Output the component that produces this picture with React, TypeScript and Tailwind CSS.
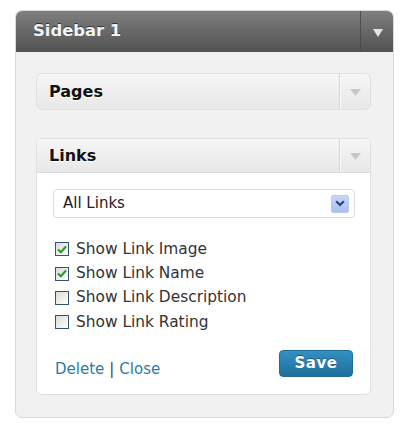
import { useState } from 'react';

const font = { fontFamily: '"DejaVu Sans", Verdana, sans-serif' };

function DownArrow({ color, w = 10, h = 8 }: { color: string; w?: number; h?: number }) {
  return (
    <svg width={w} height={h} viewBox={`0 0 ${w} ${h}`}>
      <polygon points={`0,0 ${w},0 ${w / 2},${h}`} fill={color} />
    </svg>
  );
}

function Checkbox({ checked }: { checked: boolean }) {
  return (
    <div className="w-[14px] h-[14px] border border-[#2f5478] bg-gradient-to-br from-[#dcdad3] to-white flex items-center justify-center">
      {checked && (
        <svg width="10" height="9" viewBox="0 0 10 9">
          <path d="M1 4.5 L3.8 7.2 L9 1.5" stroke="#21a121" strokeWidth="2.2" fill="none" />
        </svg>
      )}
    </div>
  );
}

export default function App() {
  const [options, setOptions] = useState([
    { label: 'Show Link Image', checked: true },
    { label: 'Show Link Name', checked: true },
    { label: 'Show Link Description', checked: false },
    { label: 'Show Link Rating', checked: false },
  ]);

  const toggle = (i: number) =>
    setOptions(options.map((o, j) => (j === i ? { ...o, checked: !o.checked } : o)));

  return (
    <div className="w-[405px] h-[431px] bg-white pt-[10px] pl-[15px]" style={font}>
      <div className="w-[379px] h-[408px] rounded-[7px] border border-[#d9d9d9] bg-[#f1f1f1] flex flex-col overflow-hidden">
        {/* Sidebar header */}
        <div className="h-[41px] flex bg-gradient-to-b from-[#7f7f7f] to-[#525252] shrink-0">
          <div className="flex-1 flex items-center pl-[17px] text-[16.4px] font-bold text-[#f4f4f4] [text-shadow:0_-1px_0_#333]">
            Sidebar 1
          </div>
          <div className="w-[33px] border-l border-[#4c4c4c] flex items-center justify-center pl-[1px] pt-[2px]">
            <DownArrow color="#e4e4e4" w={10} h={8} />
          </div>
        </div>

        <div className="pl-[20px] pr-[22px] pt-[21px]">
          {/* Pages widget */}
          <div className="h-[37px] rounded-[6px] border border-[#e0e0e0] bg-gradient-to-b from-[#f6f6f6] to-[#e8e8e8] flex">
            <div className="flex-1 flex items-center pl-[12px] text-[16px] font-bold text-[#111] [text-shadow:0_1px_0_#fff]">
              Pages
            </div>
            <div className="w-[31px] border-l border-[#d6d6d6] shadow-[inset_1px_0_0_#fafafa] flex items-center justify-center pt-[2px]">
              <DownArrow color="#c9c9c9" w={11} h={7} />
            </div>
          </div>

          {/* Links widget */}
          <div className="mt-[28px] rounded-[6px] border border-[#e0e0e0] overflow-hidden bg-white">
            <div className="h-[34px] border-b border-[#dedede] bg-gradient-to-b from-[#f6f6f6] to-[#e8e8e8] flex">
              <div className="flex-1 flex items-center pl-[12px] text-[16px] font-bold text-[#111] [text-shadow:0_1px_0_#fff]">
                Links
              </div>
              <div className="w-[31px] border-l border-[#d6d6d6] shadow-[inset_1px_0_0_#fafafa] flex items-center justify-center pt-[2px]">
                <DownArrow color="#c9c9c9" w={11} h={7} />
              </div>
            </div>

            <div className="pl-[16px] pr-[15px] pt-[16px] pb-[15px]">
              <div className="h-[29px] rounded-[4px] border border-[#dcdcdc] flex items-center justify-between pl-[9px] pr-[5px]">
                <span className="text-[15px] text-[#222]">All Links</span>
                <div className="w-[18px] h-[18px] rounded-[2px] bg-gradient-to-b from-[#c6d6f8] to-[#a9c0ef] border border-[#b9cbef] flex items-center justify-center">
                  <svg width="10" height="7" viewBox="0 0 10 7">
                    <path d="M1.2 1.2 L5 5 L8.8 1.2" stroke="#27457e" strokeWidth="2.2" fill="none" />
                  </svg>
                </div>
              </div>

              <div className="mt-[19px] flex flex-col">
                {options.map((o, i) => (
                  <label
                    key={o.label}
                    onClick={() => toggle(i)}
                    className="h-[24.4px] flex items-center gap-[7px] pl-[2px] text-[15.4px] text-[#333] cursor-pointer"
                  >
                    <Checkbox checked={o.checked} />
                    <span>{o.label}</span>
                  </label>
                ))}
              </div>

              <div className="mt-[15px] flex items-start justify-between">
                <div className="mt-[9px] text-[15px] leading-[20px] pl-[2px]">
                  <a className="text-[#2f7ca6]">Delete</a>
                  <span className="text-[#444] mx-[5px]">|</span>
                  <a className="text-[#2f7ca6]">Close</a>
                </div>
                <button className="mr-[2px] w-[74px] h-[27px] rounded-[4px] border border-[#1f6c98] bg-gradient-to-b from-[#3290c3] to-[#1f6f9c] text-white text-[15px] font-bold tracking-[0.5px] flex items-center justify-center [text-shadow:0_-1px_0_#155a80]">
                  Save
                </button>
              </div>
            </div>
          </div>
        </div>
      </div>
    </div>
  );
}
